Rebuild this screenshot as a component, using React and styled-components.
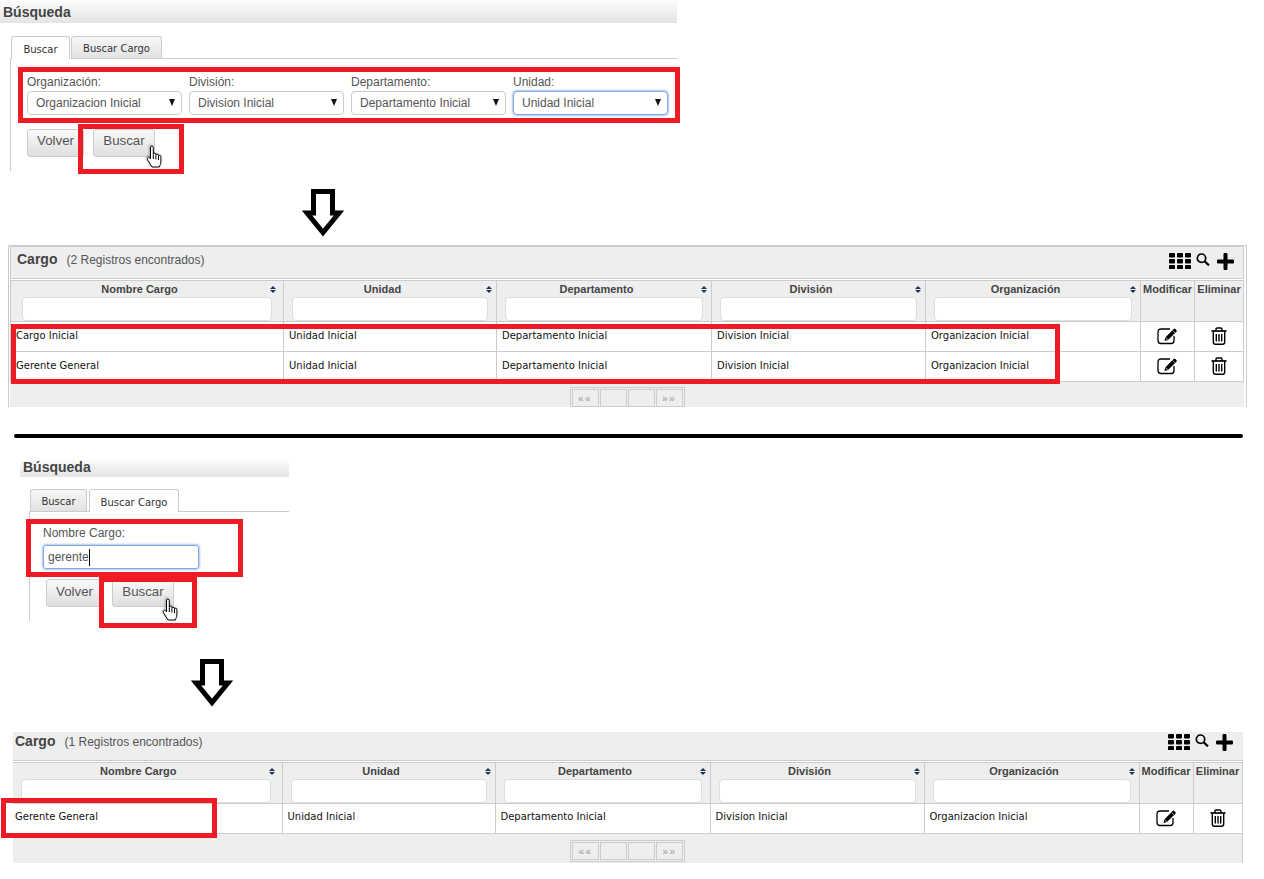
import React from "react";
import styled, { createGlobalStyle, css } from "styled-components";

const GlobalStyle = createGlobalStyle`
  html, body {
    margin: 0;
    background: #fff;
    font-family: "Liberation Sans", Arial, sans-serif;
  }
`;

const Page = styled.div`
  position: relative;
  width: 1264px;
  height: 879px;
  overflow: hidden;
  display: flex;
  flex-direction: column;
  align-items: flex-start;
`;

/* ---------- search panel ---------- */

const SearchPanel = styled.section`
  width: ${(p) => p.$width}px;
  margin: ${(p) => p.$top}px 0 0 ${(p) => p.$left}px;
`;

const HeaderBar = styled.div`
  box-sizing: border-box;
  height: ${(p) => p.$height}px;
  padding: 0 0 ${(p) => p.$lift || 0}px 3px;
  display: flex;
  align-items: center;
  background: linear-gradient(#fbfbfb, #e4e4e4);
  color: #444;
  font-size: 14px;
  font-weight: bold;
`;

const TabStrip = styled.div`
  display: flex;
  gap: ${(p) => p.$gap}px;
  height: 22px;
  margin: ${(p) => p.$top}px 0 0 ${(p) => p.$left}px;
  padding-left: 1px;
  border-bottom: 1px solid #ccc;
`;

const Tab = styled.div`
  box-sizing: border-box;
  width: ${(p) => p.$width}px;
  height: 23px;
  display: flex;
  align-items: center;
  justify-content: center;
  border: 1px solid #ccc;
  border-bottom: 0;
  border-radius: 3px 3px 0 0;
  color: #333;
  font-family: "DejaVu Sans", Verdana, sans-serif;
  font-size: 10px;
  ${(p) =>
    p.$active
      ? css`
          background: #fff;
          padding-top: 2px;
        `
      : css`
          height: 22px;
          padding-top: 1px;
          background: linear-gradient(#f7f7f7, #e2e2e2);
        `}
`;

const TabBody = styled.div`
  height: ${(p) => p.$height}px;
  margin-left: ${(p) => p.$left}px;
  padding: ${(p) => p.$padTop}px 0 0 ${(p) => p.$padLeft}px;
  box-sizing: border-box;
  border-left: 1px solid #ccc;
`;

const FieldRow = styled.div`
  display: flex;
  gap: 7px;
`;

const Field = styled.label`
  display: flex;
  flex-direction: column;
  width: ${(p) => p.$width}px;
`;

const FieldLabel = styled.span`
  height: ${(p) => p.$height}px;
  color: #555;
  font-size: 12px;
  line-height: 14px;
`;

const SelectWrap = styled.div`
  position: relative;

  &::after {
    content: "";
    position: absolute;
    right: 7px;
    top: 8px;
    border: 3px solid transparent;
    border-top: 7px solid #111;
    border-bottom: 0;
  }
`;

const focusRing = css`
  border-color: #86a8e0;
  box-shadow: 0 0 2px 1px rgba(110, 160, 235, 0.6);
`;

const Select = styled.select`
  appearance: none;
  display: block;
  box-sizing: border-box;
  width: 100%;
  height: 24px;
  padding: 0 0 0 8px;
  border: 1px solid #ccc;
  border-radius: 4px;
  background: #fff;
  color: #555;
  font-family: inherit;
  font-size: 12px;
  ${(p) => p.$focused && focusRing}
`;

const TypedInput = styled.div`
  box-sizing: border-box;
  width: 156px;
  height: 24px;
  display: flex;
  align-items: center;
  padding-left: 4px;
  border: 1px solid #ccc;
  border-radius: 3px;
  color: #555;
  font-size: 12px;
  ${focusRing}
`;

const Caret = styled.span`
  width: 1px;
  height: 17px;
  background: #000;
`;

const ButtonRow = styled.div`
  display: flex;
  gap: 9px;
  margin: ${(p) => p.$top}px 0 0 ${(p) => p.$left}px;
`;

const ActionButton = styled.button`
  box-sizing: border-box;
  width: ${(p) => p.$width}px;
  height: 28px;
  padding: 0 0 ${(p) => p.$lift}px;
  border: 1px solid #ccc;
  border-radius: 3px;
  background: linear-gradient(#fafafa, #dedede);
  color: #555;
  font-family: inherit;
  font-size: 13.3px;
`;

/* ---------- arrows and divider ---------- */

const ArrowSlot = styled.div`
  display: flex;
  margin: ${(p) => p.$top}px 0 0 ${(p) => p.$left}px;
`;

const Divider = styled.hr`
  width: 1229px;
  height: 4px;
  margin: 27px 0 0 14px;
  border: 0;
  border-radius: 2px;
  background: #000;
`;

/* ---------- results table ---------- */

const TablePanel = styled.section`
  box-sizing: border-box;
  margin-top: ${(p) => (p.$compact ? 25 : 8)}px;
  margin-left: ${(p) => (p.$compact ? 13 : 8)}px;
  width: ${(p) => (p.$compact ? 1230 : 1239)}px;
  ${(p) =>
    !p.$compact &&
    css`
      padding: 0 2px 0 1px;
      border: 1px solid #ccc;
      border-bottom: 0;
    `}
`;

const Caption = styled.div`
  box-sizing: border-box;
  height: ${(p) => (p.$compact ? 29 : 33)}px;
  display: flex;
  justify-content: space-between;
  padding: ${(p) => (p.$compact ? "1px 10px 0 2px" : "4px 9px 0 6px")};
  background: #eee;
  border: 1px solid #ccc;
  ${(p) =>
    p.$compact &&
    css`
      border-width: 0 0 1px;
    `}
`;

const CaptionText = styled.div`
  display: flex;
  align-items: baseline;
  gap: 9px;
  height: 16px;
  color: #444;
`;

const CaptionTitle = styled.span`
  font-size: 14px;
  font-weight: bold;
`;

const CaptionCount = styled.span`
  color: #555;
  font-size: 12px;
`;

const CaptionIcons = styled.div`
  display: flex;
  align-items: flex-start;
  gap: 5px;
  margin-top: ${(p) => (p.$compact ? 1 : 2)}px;

  svg:nth-child(2) {
    margin-right: 2px;
  }
`;

const Table = styled.table`
  table-layout: fixed;
  width: ${(p) => (p.$compact ? 1229 : 1233)}px;
  margin-top: 1px;
  border-collapse: collapse;
`;

const thPadding = (p) => {
  if (p.$plain) return "1px 0 0";
  if (p.$first) return `1px 11px 0 ${p.$compact ? 8 : 11}px`;
  return "1px 8px 0 8px";
};

const Th = styled.th`
  height: 40px;
  padding: ${thPadding};
  box-sizing: border-box;
  vertical-align: top;
  background: #eee;
  border: 1px solid #ccc;
  ${(p) => p.$first && p.$compact && "border-left: 0;"}
  color: #444;
  font-size: 11px;
  font-weight: bold;
  line-height: 14px;
`;

const ThTitle = styled.div`
  display: flex;
  align-items: center;
  justify-content: space-between;
  height: 14px;
  margin-right: -4px;
`;

const ThLabel = styled.span`
  flex: 1;
  padding-right: 13px;
  text-align: center;
`;

const SortMark = styled.span`
  display: flex;
  flex-direction: column;
  gap: 1px;

  &::before,
  &::after {
    content: "";
    border: 3px solid transparent;
    border-bottom: 3.5px solid #1f3557;
    border-top: 0;
  }

  &::after {
    border-top: 3.5px solid #1f3557;
    border-bottom: 0;
  }
`;

const FilterInput = styled.input`
  display: block;
  box-sizing: border-box;
  width: 100%;
  height: 24px;
  margin-top: 1px;
  border: 1px solid #ddd;
  border-radius: 4px;
  background: #fff;
`;

const tdPadding = (p) => {
  if (p.$icon) return "5px 0 0";
  if (p.$compact) return p.$first ? "7px 0 0 2px" : "7px 0 0 5px";
  return "8px 0 0 5px";
};

const Td = styled.td`
  height: 30px;
  padding: ${tdPadding};
  box-sizing: border-box;
  vertical-align: top;
  background: #fff;
  border: 1px solid #ccc;
  ${(p) => p.$first && p.$compact && "border-left: 0;"}
  color: #111;
  font-family: "DejaVu Sans", Verdana, sans-serif;
  font-size: 10px;
  line-height: 12px;
  text-align: ${(p) => (p.$icon ? "center" : "left")};

  svg {
    display: inline-block;
  }
`;

const TableFooter = styled.div`
  box-sizing: border-box;
  height: ${(p) => (p.$compact ? 29 : 25)}px;
  width: ${(p) => (p.$compact ? 1230 : 1234)}px;
  display: flex;
  justify-content: center;
  align-items: flex-start;
  padding-top: ${(p) => (p.$compact ? 6 : 5)}px;
  overflow: hidden;
  background: #eee;
  ${(p) => p.$compact && "border-right: 1px solid #ccc;"}
`;

const Pager = styled.div`
  display: flex;
  gap: 1px;
  padding: 1px;
  border: 1px solid #ccc;
`;

const PagerButton = styled.span`
  box-sizing: border-box;
  width: 27px;
  height: 18px;
  display: flex;
  align-items: center;
  justify-content: center;
  border: 1px solid #ccc;
  color: #999;
  font-size: 10px;
  letter-spacing: 1.5px;
`;

/* ---------- annotations laid over the captures ---------- */

const RedBox = styled.div`
  position: absolute;
  box-sizing: border-box;
  left: ${(p) => p.$x}px;
  top: ${(p) => p.$y}px;
  width: ${(p) => p.$w}px;
  height: ${(p) => p.$h}px;
  border: 5px solid #ed1c24;
  pointer-events: none;
`;

const HandSpot = styled.div`
  position: absolute;
  left: ${(p) => p.$x}px;
  top: ${(p) => p.$y}px;
  display: flex;
  filter: drop-shadow(-1px -1px 1px rgba(0, 0, 0, 0.3));
`;

/* ---------- drawings ---------- */

const DownArrow = () => (
  <svg width="42" height="48" viewBox="0 0 42 48" fill="#fff" stroke="#000" strokeWidth="5">
    <path d="M11.5 2.5H30.5V24H37L21 43.5 5 24H11.5Z" />
  </svg>
);

const HandCursor = () => (
  <svg width="18" height="23" viewBox="0 0 18 23" fill="#fff" stroke="#000" strokeWidth="1">
    <path d="M4.5 2.5a1.4 1.4 0 0 1 2.8 0V9.5a1.3 1.3 0 0 1 2.6 0V10.5a1.3 1.3 0 0 1 2.6 0V11.5a1.2 1.2 0 0 1 2.4 0V17c0 2-1 3-1.5 5H6L2 15.5c-1-1.5-.8-2.6 0-3 .8-.4 1.6 0 2.5 1.2z" />
    <path d="M7.3 10v4M9.9 11v3.5M12.5 11.5V15" fill="none" />
  </svg>
);

const GridIcon = () => (
  <svg width="22" height="16" viewBox="0 0 22 16" fill="#000">
    {[0, 6, 12].map((y) =>
      [0, 8, 16].map((x) => <rect key={`${x}-${y}`} x={x} y={y} width="6" height="4.4" rx="1" />)
    )}
  </svg>
);

const SearchIcon = () => (
  <svg width="14" height="13" viewBox="0 0 14 13" fill="none" stroke="#000" strokeWidth="1.7">
    <circle cx="5.5" cy="5.2" r="4.2" />
    <path d="M8.6 8.3 13 12.4" strokeWidth="2.2" />
  </svg>
);

const PlusIcon = () => (
  <svg width="17" height="17" viewBox="0 0 17 17" fill="#000">
    <path d="M6.5 1.2Q6.5 0 7.7 0H9.3Q10.5 0 10.5 1.2V6.5H15.8Q17 6.5 17 7.7V9.3Q17 10.5 15.8 10.5H10.5V15.8Q10.5 17 9.3 17H7.7Q6.5 17 6.5 15.8V10.5H1.2Q0 10.5 0 9.3V7.7Q0 6.5 1.2 6.5H6.5Z" />
  </svg>
);

const EditIcon = () => (
  <svg width="21" height="18" viewBox="0 0 21 18">
    <path d="M13 2H4Q1 2 1 5v8.5q0 3 3 3h10.5q2.5 0 2.5-3V9" fill="none" stroke="#000" strokeWidth="1.3" />
    <path d="M7.5 14l.8-3.6L16.6 2q.9-.9 1.8 0l1 1q.9.9 0 1.8L11 13z" fill="#000" />
    <path d="M8.8 10.6l2 2" stroke="#fff" strokeWidth="0.8" />
    <path d="M15.4 3.3l2.6 2.6" stroke="#fff" strokeWidth="0.6" />
  </svg>
);

const TrashIcon = () => (
  <svg width="16" height="18" viewBox="0 0 16 18" fill="none" stroke="#000" strokeWidth="1.4">
    <path d="M0.5 4H15.5" strokeWidth="1.7" />
    <path d="M5 4V2.2Q5 1 6.2 1H9.8Q11 1 11 2.2V4" />
    <path d="M2.3 4V15Q2.3 17.2 4.5 17.2H11.5Q13.7 17.2 13.7 15V4" />
    <path d="M5.3 7V14.5M8 7V14.5M10.7 7V14.5" />
  </svg>
);

/* ---------- data ---------- */

const COLUMNS = ["Nombre Cargo", "Unidad", "Departamento", "División", "Organización"];
const FIELDS = [
  { label: "Organización:", value: "Organizacion Inicial" },
  { label: "División:", value: "Division Inicial" },
  { label: "Departamento:", value: "Departamento Inicial" },
  { label: "Unidad:", value: "Unidad Inicial", focused: true },
];
const CARGO_1 = ["Cargo Inicial", "Unidad Inicial", "Departamento Inicial", "Division Inicial", "Organizacion Inicial"];
const CARGO_2 = ["Gerente General", "Unidad Inicial", "Departamento Inicial", "Division Inicial", "Organizacion Inicial"];

const ResultsTable = ({ count, rows, compact }) => {
  const firstWidth = compact ? 269 : 273;
  return (
    <TablePanel $compact={compact}>
      <Caption $compact={compact}>
        <CaptionText>
          <CaptionTitle>Cargo</CaptionTitle>
          <CaptionCount>({count} Registros encontrados)</CaptionCount>
        </CaptionText>
        <CaptionIcons $compact={compact}>
          <GridIcon />
          <SearchIcon />
          <PlusIcon />
        </CaptionIcons>
      </Caption>
      <Table $compact={compact}>
        <colgroup>
          {[firstWidth, 213, 215, 214, 215, 54, 49].map((w, i) => (
            <col key={i} width={w} />
          ))}
        </colgroup>
        <thead>
          <tr>
            {COLUMNS.map((name, i) => (
              <Th key={name} $first={i === 0} $compact={compact}>
                <ThTitle>
                  <ThLabel>{name}</ThLabel>
                  <SortMark />
                </ThTitle>
                <FilterInput type="text" aria-label={name} />
              </Th>
            ))}
            <Th $plain>Modificar</Th>
            <Th $plain>Eliminar</Th>
          </tr>
        </thead>
        <tbody>
          {rows.map((row) => (
            <tr key={row[0]}>
              {row.map((cell, i) => (
                <Td key={i} $first={i === 0} $compact={compact}>
                  {cell}
                </Td>
              ))}
              <Td $icon>
                <EditIcon />
              </Td>
              <Td $icon>
                <TrashIcon />
              </Td>
            </tr>
          ))}
        </tbody>
      </Table>
      <TableFooter $compact={compact}>
        <Pager>
          <PagerButton>««</PagerButton>
          <PagerButton />
          <PagerButton />
          <PagerButton>»»</PagerButton>
        </Pager>
      </TableFooter>
    </TablePanel>
  );
};

const App = () => (
  <Page>
    <GlobalStyle />

    <SearchPanel $top={1} $left={0} $width={677}>
      <HeaderBar $height={22}>Búsqueda</HeaderBar>
      <TabStrip $top={13} $left={10} $gap={1}>
        <Tab $width={59} $active>Buscar</Tab>
        <Tab $width={91}>Buscar Cargo</Tab>
      </TabStrip>
      <TabBody $left={10} $height={112} $padTop={16} $padLeft={16}>
        <FieldRow>
          {FIELDS.map((f) => (
            <Field key={f.label} $width={155}>
              <FieldLabel $height={16}>{f.label}</FieldLabel>
              <SelectWrap>
                <Select $focused={f.focused} defaultValue={f.value}>
                  <option>{f.value}</option>
                </Select>
              </SelectWrap>
            </Field>
          ))}
        </FieldRow>
        <ButtonRow $top={14} $left={0}>
          <ActionButton $width={57} $lift={5}>Volver</ActionButton>
          <ActionButton $width={62} $lift={5}>Buscar</ActionButton>
        </ButtonRow>
      </TabBody>
    </SearchPanel>

    <ArrowSlot $top={18} $left={302}>
      <DownArrow />
    </ArrowSlot>

    <ResultsTable count={2} rows={[CARGO_1, CARGO_2]} />

    <Divider />

    <SearchPanel $top={22} $left={20} $width={269}>
      <HeaderBar $height={17} $lift={4}>Búsqueda</HeaderBar>
      <TabStrip $top={12} $left={9} $gap={2}>
        <Tab $width={57}>Buscar</Tab>
        <Tab $width={90} $active>Buscar Cargo</Tab>
      </TabStrip>
      <TabBody $left={9} $height={109} $padTop={14} $padLeft={13}>
        <Field $width={156}>
          <FieldLabel $height={19}>Nombre Cargo:</FieldLabel>
          <TypedInput>
            gerente
            <Caret />
          </TypedInput>
        </Field>
        <ButtonRow $top={10} $left={3}>
          <ActionButton $width={57} $lift={3}>Volver</ActionButton>
          <ActionButton $width={62} $lift={3}>Buscar</ActionButton>
        </ButtonRow>
      </TabBody>
    </SearchPanel>

    <ArrowSlot $top={38} $left={191}>
      <DownArrow />
    </ArrowSlot>

    <ResultsTable count={1} rows={[CARGO_2]} compact />

    <RedBox $x={18} $y={67} $w={662} $h={56} />
    <RedBox $x={78} $y={124} $w={106} $h={50} />
    <RedBox $x={11} $y={324} $w={1049} $h={60} />
    <RedBox $x={26} $y={519} $w={217} $h={58} />
    <RedBox $x={99} $y={577} $w={98} $h={51} />
    <RedBox $x={1} $y={798} $w={216} $h={40} />
    <HandSpot $x={146} $y={145}>
      <HandCursor />
    </HandSpot>
    <HandSpot $x={162} $y={598}>
      <HandCursor />
    </HandSpot>
  </Page>
);

export default App;
